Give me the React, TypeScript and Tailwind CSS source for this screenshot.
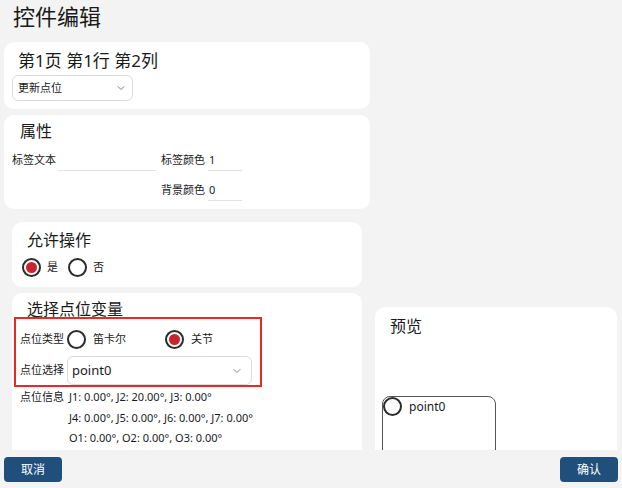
import React from 'react';
import { ChevronDown } from 'lucide-react';

const font = { fontFamily: '"Noto Sans", "Noto Sans CJK SC", sans-serif' };

const Radio = ({ checked }: { checked?: boolean }) => (
  <span className="w-[19px] h-[19px] shrink-0 rounded-full border-2 border-[#2b2b2b] bg-white flex items-center justify-center">
    {checked && <span className="w-[11px] h-[11px] rounded-full bg-[#c8232f]" />}
  </span>
);

const infoLines = [
  'J1: 0.00°, J2: 20.00°, J3: 0.00°',
  'J4: 0.00°, J5: 0.00°, J6: 0.00°, J7: 0.00°',
  'O1: 0.00°, O2: 0.00°, O3: 0.00°',
  'O4: 0.00°, O5: 0.00°, O6: 0.00°',
];

const App: React.FC = () => {
  return (
    <div className="w-[622px] h-[488px] bg-[#f3f3f3] text-[#1a1a1a] flex flex-col overflow-hidden" style={font}>
      {/* Header */}
      <div className="h-[42px] shrink-0 pl-[13px] pt-[1px]">
        <h1 className="text-[22px] leading-[30px]">控件编辑</h1>
      </div>

      {/* Body */}
      <div className="flex-1 min-h-0 flex overflow-hidden">
        {/* Left column */}
        <div className="w-[366px] ml-[4px] shrink-0 flex flex-col">
          <div className="shrink-0 bg-white rounded-[10px] h-[67px] pt-[7px] pl-[8px]">
            <div className="text-[17px] leading-[24px] pl-[6px]">第1页 第1行 第2列</div>
            <div className="mt-[2px] w-[121px] h-[26px] border border-[#dcdcdc] rounded-[6px] flex items-center justify-between pl-[5px] pr-[5px]">
              <span className="text-[11px]">更新点位</span>
              <ChevronDown size={12} strokeWidth={1.5} className="text-[#555]" />
            </div>
          </div>

          <div className="shrink-0 bg-white rounded-[10px] h-[94px] mt-[6px] pt-[5px] pl-[8px]">
            <div className="text-[16px] leading-[22px] pl-[8px]">属性</div>
            <div className="mt-[7px] flex items-end h-[22px] text-[11px]">
              <span className="w-[46px] shrink-0 self-center">标签文本</span>
              <span className="w-[98px] shrink-0 h-[22px] border-b border-[#e2e2e2]" />
              <span className="w-[47px] shrink-0 ml-[5px] self-center">标签颜色</span>
              <span className="w-[34px] shrink-0 h-[22px] leading-[22px] border-b border-[#e2e2e2] pl-[1px]">1</span>
            </div>
            <div className="mt-[8px] flex items-end h-[22px] text-[11px]">
              <span className="w-[149px] shrink-0" />
              <span className="w-[47px] shrink-0 self-center">背景颜色</span>
              <span className="w-[34px] shrink-0 h-[22px] leading-[22px] border-b border-[#e2e2e2] pl-[1px]">0</span>
            </div>
          </div>

          <div className="shrink-0 mx-[8px] mt-[13px] bg-white rounded-[10px] h-[65px] pt-[8px] pl-[10px]">
            <div className="text-[16px] leading-[20px] pl-[5px]">允许操作</div>
            <div className="mt-[8px] flex items-center gap-[6px] text-[11px]">
              <Radio checked />
              <span className="mr-[4px]">是</span>
              <Radio />
              <span>否</span>
            </div>
          </div>

          <div className="shrink-0 mx-[8px] mt-[6px] bg-white rounded-t-[10px] h-[200px] pt-[8px]">
            <div className="text-[16px] leading-[16px] pl-[15px]">选择点位变量</div>
            <div className="ml-[2px] w-[248px] h-[70px] border-2 border-[#e82a25] pt-[6px] pl-[4px] text-[11px]">
              <div className="h-[28px] flex items-center">
                <span className="w-[47px] shrink-0">点位类型</span>
                <div className="w-[98px] shrink-0 flex items-center gap-[7px]">
                  <Radio />
                  <span>笛卡尔</span>
                </div>
                <div className="flex items-center gap-[7px]">
                  <Radio checked />
                  <span>关节</span>
                </div>
              </div>
              <div className="mt-[3px] h-[29px] flex items-center">
                <span className="w-[47px] shrink-0">点位选择</span>
                <div className="w-[185px] shrink-0 h-[29px] border border-[#dcdcdc] rounded-[6px] flex items-center justify-between pl-[4px] pr-[8px]">
                  <span className="text-[13px]">point0</span>
                  <ChevronDown size={12} strokeWidth={1.5} className="text-[#555]" />
                </div>
              </div>
            </div>
            <div className="flex pl-[8px] text-[11px] leading-[20.5px]">
              <span className="w-[49px] shrink-0">点位信息</span>
              <div className="whitespace-nowrap">
                {infoLines.map((l, i) => (
                  <div key={i}>{l}</div>
                ))}
              </div>
            </div>
          </div>
        </div>

        {/* Right column */}
        <div className="flex-1 pl-[5px] pr-[5px] pt-[265px] flex flex-col">
          <div className="bg-white rounded-t-[10px] flex-1 pt-[9px]">
            <div className="text-[16px] leading-[20px] pl-[15px]">预览</div>
            <div className="ml-[7px] mt-[60px] w-[114px] h-[80px] border border-[#555] rounded-[8px] flex items-start">
              <Radio />
              <span className="ml-[7px] mt-[1px] text-[12px] leading-[18px]">point0</span>
            </div>
          </div>
        </div>
      </div>

      {/* Footer */}
      <div className="h-[38px] shrink-0 flex items-start justify-between px-[4px] pt-[7px]">
        <button className="w-[58px] h-[25px] rounded-[4px] bg-[#1f4f7a] text-white text-[12px]">取消</button>
        <button className="w-[58px] h-[25px] rounded-[4px] bg-[#1f4f7a] text-white text-[12px]">确认</button>
      </div>
    </div>
  );
};

export default App;
